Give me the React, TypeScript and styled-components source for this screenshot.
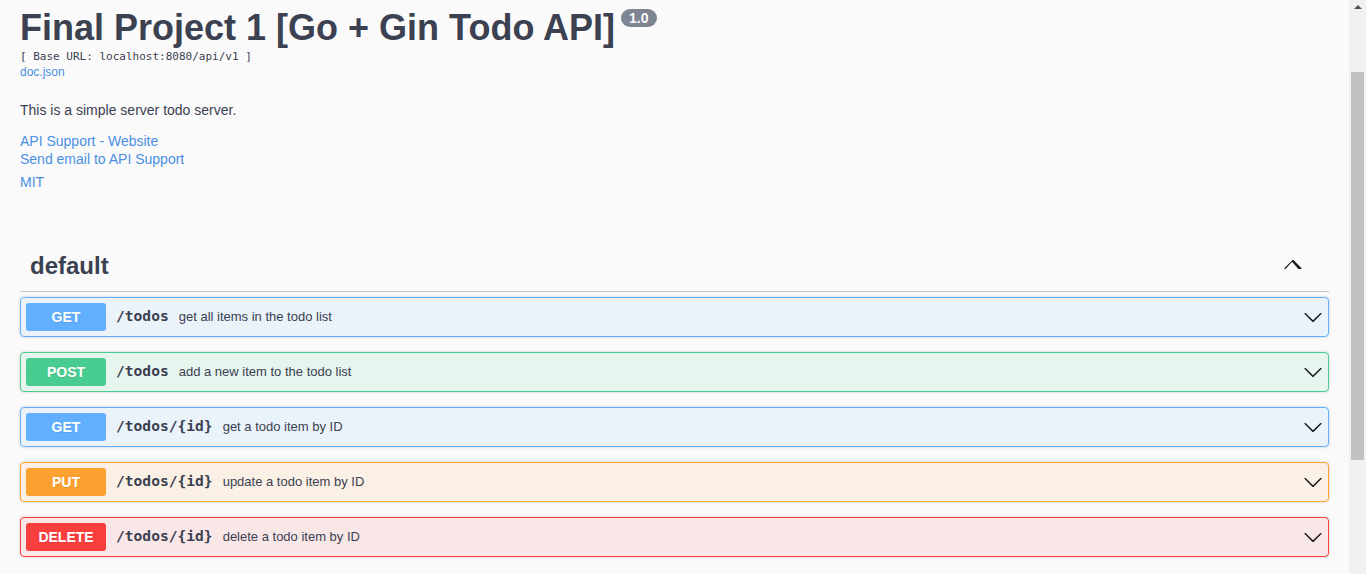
import React from "react";
import styled, { createGlobalStyle } from "styled-components";

const GlobalStyle = createGlobalStyle`
  html, body { margin: 0; padding: 0; height: 100%; overflow: hidden; background: #fafafa; }
  body { font-family: "Liberation Sans", Arial, sans-serif; color: #3b4151; }
  * { box-sizing: border-box; }
`;

const Page = styled.div`
  display: flex;
  height: 574px;
  width: 1366px;
`;

const Main = styled.main`
  flex: 1;
  min-width: 0;
  padding: 0 20px;
`;

const Info = styled.section`
  padding-top: 7px;
`;

const Title = styled.h2`
  margin: 0;
  font-size: 36px;
  line-height: 42px;
  font-weight: 700;
  color: #3b4151;
  white-space: nowrap;
`;

const Version = styled.small`
  display: inline-block;
  vertical-align: top;
  margin: 2px 0 0 6px;
  padding: 2px 8px;
  border-radius: 57px;
  background: #7d8492;
  color: #fafafa;
  font-size: 14px;
  line-height: 14px;
  font-weight: 700;
`;

const BaseUrl = styled.pre`
  margin: 1px 0 0;
  font-family: "DejaVu Sans Mono", monospace;
  font-size: 11px;
  line-height: 14px;
  color: #3b4151;
`;

const Link = styled.a<{ $size?: number }>`
  display: block;
  color: #4990e2;
  text-decoration: none;
  font-size: ${(p) => p.$size ?? 14}px;
  line-height: ${(p) => (p.$size ? 14 : 18)}px;
`;

const DocLink = styled(Link)`
  margin-top: 1px;
`;

const Description = styled.p`
  margin: 22px 0 13px;
  font-size: 14px;
  line-height: 18px;
`;

const License = styled.div`
  margin-top: 5px;
`;

const TagSection = styled.section`
  margin-top: 51px;
`;

const Tag = styled.div`
  display: flex;
  align-items: center;
  padding: 9px 20px 11px 10px;
  margin-bottom: 5px;
  border-bottom: 1px solid rgba(59, 65, 81, 0.3);
`;

const TagName = styled.h3`
  flex: 1;
  margin: 0;
  font-size: 24px;
  line-height: 29px;
  font-weight: 700;
  color: #3b4151;
`;

const ArrowButton = styled.span<{ $mr?: number; $mb?: number }>`
  display: flex;
  width: 20px;
  height: 20px;
  margin-right: ${(p) => p.$mr ?? 0}px;
  margin-bottom: ${(p) => p.$mb ?? 0}px;
  color: #1b1b1b;
`;

const methodColors: Record<string, string> = {
  GET: "97, 175, 254",
  POST: "73, 204, 144",
  PUT: "252, 161, 48",
  DELETE: "249, 62, 62",
};

const Opblock = styled.div<{ $rgb: string }>`
  margin-bottom: 15px;
  border: 1px solid rgb(${(p) => p.$rgb});
  border-radius: 4px;
  background: rgba(${(p) => p.$rgb}, 0.1);
  box-shadow: 0 0 3px rgba(0, 0, 0, 0.19);
`;

const Summary = styled.div`
  display: flex;
  align-items: center;
  padding: 5px;
`;

const Method = styled.span<{ $rgb: string }>`
  min-width: 80px;
  padding: 6px 0;
  border-radius: 3px;
  background: rgb(${(p) => p.$rgb});
  color: #fff;
  font-size: 14px;
  line-height: 16px;
  font-weight: 700;
  text-align: center;
  text-shadow: 0 1px 0 rgba(0, 0, 0, 0.1);
`;

const Path = styled.span`
  padding: 0 10px;
  margin-bottom: 2px;
  font-family: "DejaVu Sans Mono", monospace;
  font-size: 14.6px;
  line-height: 18px;
  font-weight: 700;
  color: #3b4151;
`;

const Desc = styled.span`
  flex: 1;
  font-size: 13px;
  line-height: 15px;
  margin-bottom: 2px;
  color: #3b4151;
`;

const ScrollTrack = styled.div`
  width: 17px;
  flex: none;
  background: #f1f1f1;
  display: flex;
  flex-direction: column;
  align-items: center;
`;

const ScrollArrow = styled.div`
  width: 17px;
  height: 17px;
  display: flex;
  align-items: center;
  justify-content: center;
  padding-bottom: 3px;
`;

const ScrollThumb = styled.div`
  margin-top: 55px;
  width: 13px;
  height: 388px;
  background: #c1c1c1;
`;

const ArrowDown = () => (
  <svg width="20" height="20" viewBox="0 0 20 20" fill="currentColor">
    <path d="M17.418 6.109c.272-.268.709-.268.979 0s.271.701 0 .969l-7.908 7.83c-.27.268-.707.268-.979 0l-7.908-7.83c-.27-.268-.27-.701 0-.969.271-.268.709-.268.979 0L10 13.25l7.418-7.141z" />
  </svg>
);

const ArrowUp = () => (
  <svg width="20" height="20" viewBox="0 0 20 20" fill="currentColor">
    <path d="M17.418 14.908c-.272.268-.709.268-.979 0L10 7.767l-6.439 7.141c-.27.268-.707.268-.979 0-.27-.268-.27-.701 0-.969l7.908-7.83c.27-.268.707-.268.979 0l7.908 7.83c.271.268.271.701.021.969z" />
  </svg>
);

const ops = [
  { method: "GET", path: "/todos", desc: "get all items in the todo list" },
  { method: "POST", path: "/todos", desc: "add a new item to the todo list" },
  { method: "GET", path: "/todos/{id}", desc: "get a todo item by ID" },
  { method: "PUT", path: "/todos/{id}", desc: "update a todo item by ID" },
  { method: "DELETE", path: "/todos/{id}", desc: "delete a todo item by ID" },
];

export default function App() {
  return (
    <>
      <GlobalStyle />
      <Page>
        <Main>
          <Info>
            <Title>
              Final Project 1 [Go + Gin Todo API]
              <Version>1.0</Version>
            </Title>
            <BaseUrl>[ Base URL: localhost:8080/api/v1 ]</BaseUrl>
            <DocLink href="#" $size={12}>doc.json</DocLink>
            <Description>This is a simple server todo server.</Description>
            <div>
              <Link href="#">API Support - Website</Link>
              <Link href="#">Send email to API Support</Link>
            </div>
            <License>
              <Link href="#">MIT</Link>
            </License>
          </Info>
          <TagSection>
            <Tag>
              <TagName>default</TagName>
              <ArrowButton $mr={7} $mb={3}>
                <ArrowUp />
              </ArrowButton>
            </Tag>
            {ops.map((op, i) => {
              const rgb = methodColors[op.method];
              return (
                <Opblock key={i} $rgb={rgb}>
                  <Summary>
                    <Method $rgb={rgb}>{op.method}</Method>
                    <Path>{op.path}</Path>
                    <Desc>{op.desc}</Desc>
                    <ArrowButton>
                      <ArrowDown />
                    </ArrowButton>
                  </Summary>
                </Opblock>
              );
            })}
          </TagSection>
        </Main>
        <ScrollTrack>
          <ScrollArrow>
            <svg width="8" height="4" viewBox="0 0 8 4">
              <polygon points="0,4 4,0 8,4" fill="#505050" />
            </svg>
          </ScrollArrow>
          <ScrollThumb />
        </ScrollTrack>
      </Page>
    </>
  );
}
